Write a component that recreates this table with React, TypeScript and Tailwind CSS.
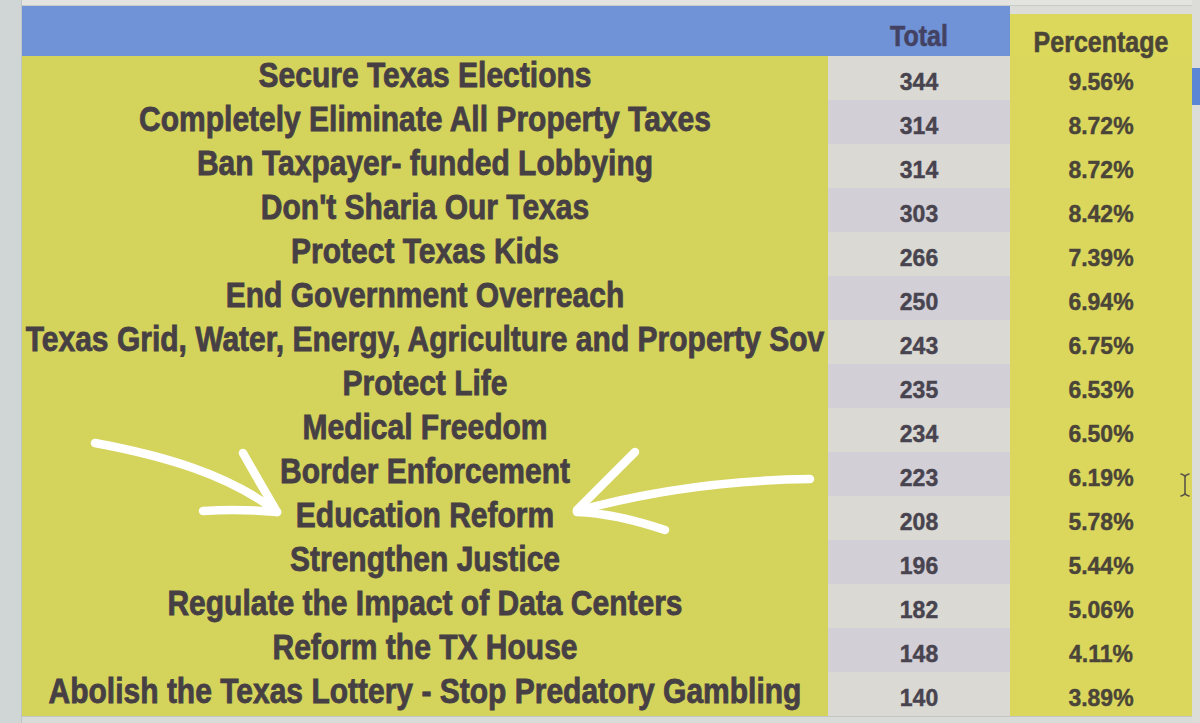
import React from "react";

const rows: [string, string, string][] = [
  ["Secure Texas Elections", "344", "9.56%"],
  ["Completely Eliminate All Property Taxes", "314", "8.72%"],
  ["Ban Taxpayer- funded Lobbying", "314", "8.72%"],
  ["Don't Sharia Our Texas", "303", "8.42%"],
  ["Protect Texas Kids", "266", "7.39%"],
  ["End Government Overreach", "250", "6.94%"],
  ["Texas Grid, Water, Energy, Agriculture and Property Sov", "243", "6.75%"],
  ["Protect Life", "235", "6.53%"],
  ["Medical Freedom", "234", "6.50%"],
  ["Border Enforcement", "223", "6.19%"],
  ["Education Reform", "208", "5.78%"],
  ["Strengthen Justice", "196", "5.44%"],
  ["Regulate the Impact of Data Centers", "182", "5.06%"],
  ["Reform the TX House", "148", "4.11%"],
  ["Abolish the Texas Lottery - Stop Predatory Gambling", "140", "3.89%"],
];

export default function App() {
  return (
    <div className="relative w-[1200px] h-[723px] overflow-hidden bg-[#d9dcd9] font-['Liberation_Sans',Arial,sans-serif] font-bold">
      <div className="flex h-full">
        {/* left strip */}
        <div className="w-[22px] shrink-0 bg-[#cfd6d5] border-r border-[#bfc5c4]" />
        {/* main table */}
        <div className="w-[1170px] shrink-0 flex flex-col">
          <div className="h-[6px] bg-[#e3e4e0] border-b border-[#c8cac7]" />
          {/* header */}
          <div className="grid grid-cols-[806px_182px_182px] h-[50px]">
            <div className="bg-[#6f93d6]" />
            <div className="bg-[#6f93d6] flex items-center justify-center text-[25px] text-[#434263] [-webkit-text-stroke:0.5px_#434263]">
              <span className="inline-block scale-y-115 translate-y-[6px]">Total</span>
            </div>
            <div className="bg-[#dbd85c] border-t-[8px] border-[#dcddd9] flex items-end justify-center text-[25px] text-[#4b4538] [-webkit-text-stroke:0.5px_#4b4538]">
              <span className="inline-block scale-y-115 translate-y-[5px]">Percentage</span>
            </div>
          </div>
          {rows.map(([label, total, pct], i) => (
            <div key={i} className="grid grid-cols-[806px_182px_182px] h-[44px]">
              <div className="bg-[#d4d35b] border-b border-[#c3c152] flex items-center justify-center overflow-hidden whitespace-nowrap text-[30px] text-[#463f44] [-webkit-text-stroke:0.7px_#463f44] pb-[7px]">
                <span className="inline-block scale-y-115">{label}</span>
              </div>
              <div
                className={`${i % 2 === 0 ? "bg-[#dad9d3]" : "bg-[#d2cfd7]"} border-b border-[#c3c1c5] flex items-center justify-center text-[23px] text-[#48444f] [-webkit-text-stroke:0.4px_#48444f] pt-[9px]`}
              >
                <span className="inline-block scale-y-105">{total}</span>
              </div>
              <div className="bg-[#dad75c] border-b border-[#c8c452] flex items-center justify-center text-[23px] text-[#4a4439] [-webkit-text-stroke:0.4px_#4a4439] pt-[9px]">
                <span className="inline-block scale-y-105">{pct}</span>
              </div>
            </div>
          ))}
          <div className="flex-1 bg-[#d8dbd8] border-t border-[#c4c6c3]" />
        </div>
        {/* right strip */}
        <div className="w-[8px] shrink-0 bg-[#dcdcd8] flex flex-col">
          <div className="h-[68px]" />
          <div className="h-[37px] bg-[#5b86d6]" />
        </div>
      </div>

      {/* text cursor */}
      <svg className="absolute left-[1178px] top-[472px]" width="14" height="26" viewBox="0 0 14 26">
        <path d="M3 2 Q7 3 7 5 L7 21 Q7 23 3 24 M11 2 Q7 3 7 5 M7 21 Q7 23 11 24" stroke="#5b5548" strokeWidth="1.6" fill="none" strokeLinecap="round" />
      </svg>

      {/* hand-drawn arrows */}
      <svg className="absolute left-0 top-0" width="1200" height="723" viewBox="0 0 1200 723">
        <g stroke="#ffffff" strokeWidth="8.5" fill="none" strokeLinecap="round" strokeLinejoin="round">
          <path d="M95 443 C165 456 230 475 277 512" />
          <path d="M243 453 C258 480 268 496 277 512" />
          <path d="M203 511 C230 509 255 510 277 512" />
          <path d="M810 479 C740 480 660 488 577 511" />
          <path d="M635 452 C612 475 592 495 577 510" />
          <path d="M577 512 C605 513 635 520 665 530" />
        </g>
      </svg>
    </div>
  );
}
